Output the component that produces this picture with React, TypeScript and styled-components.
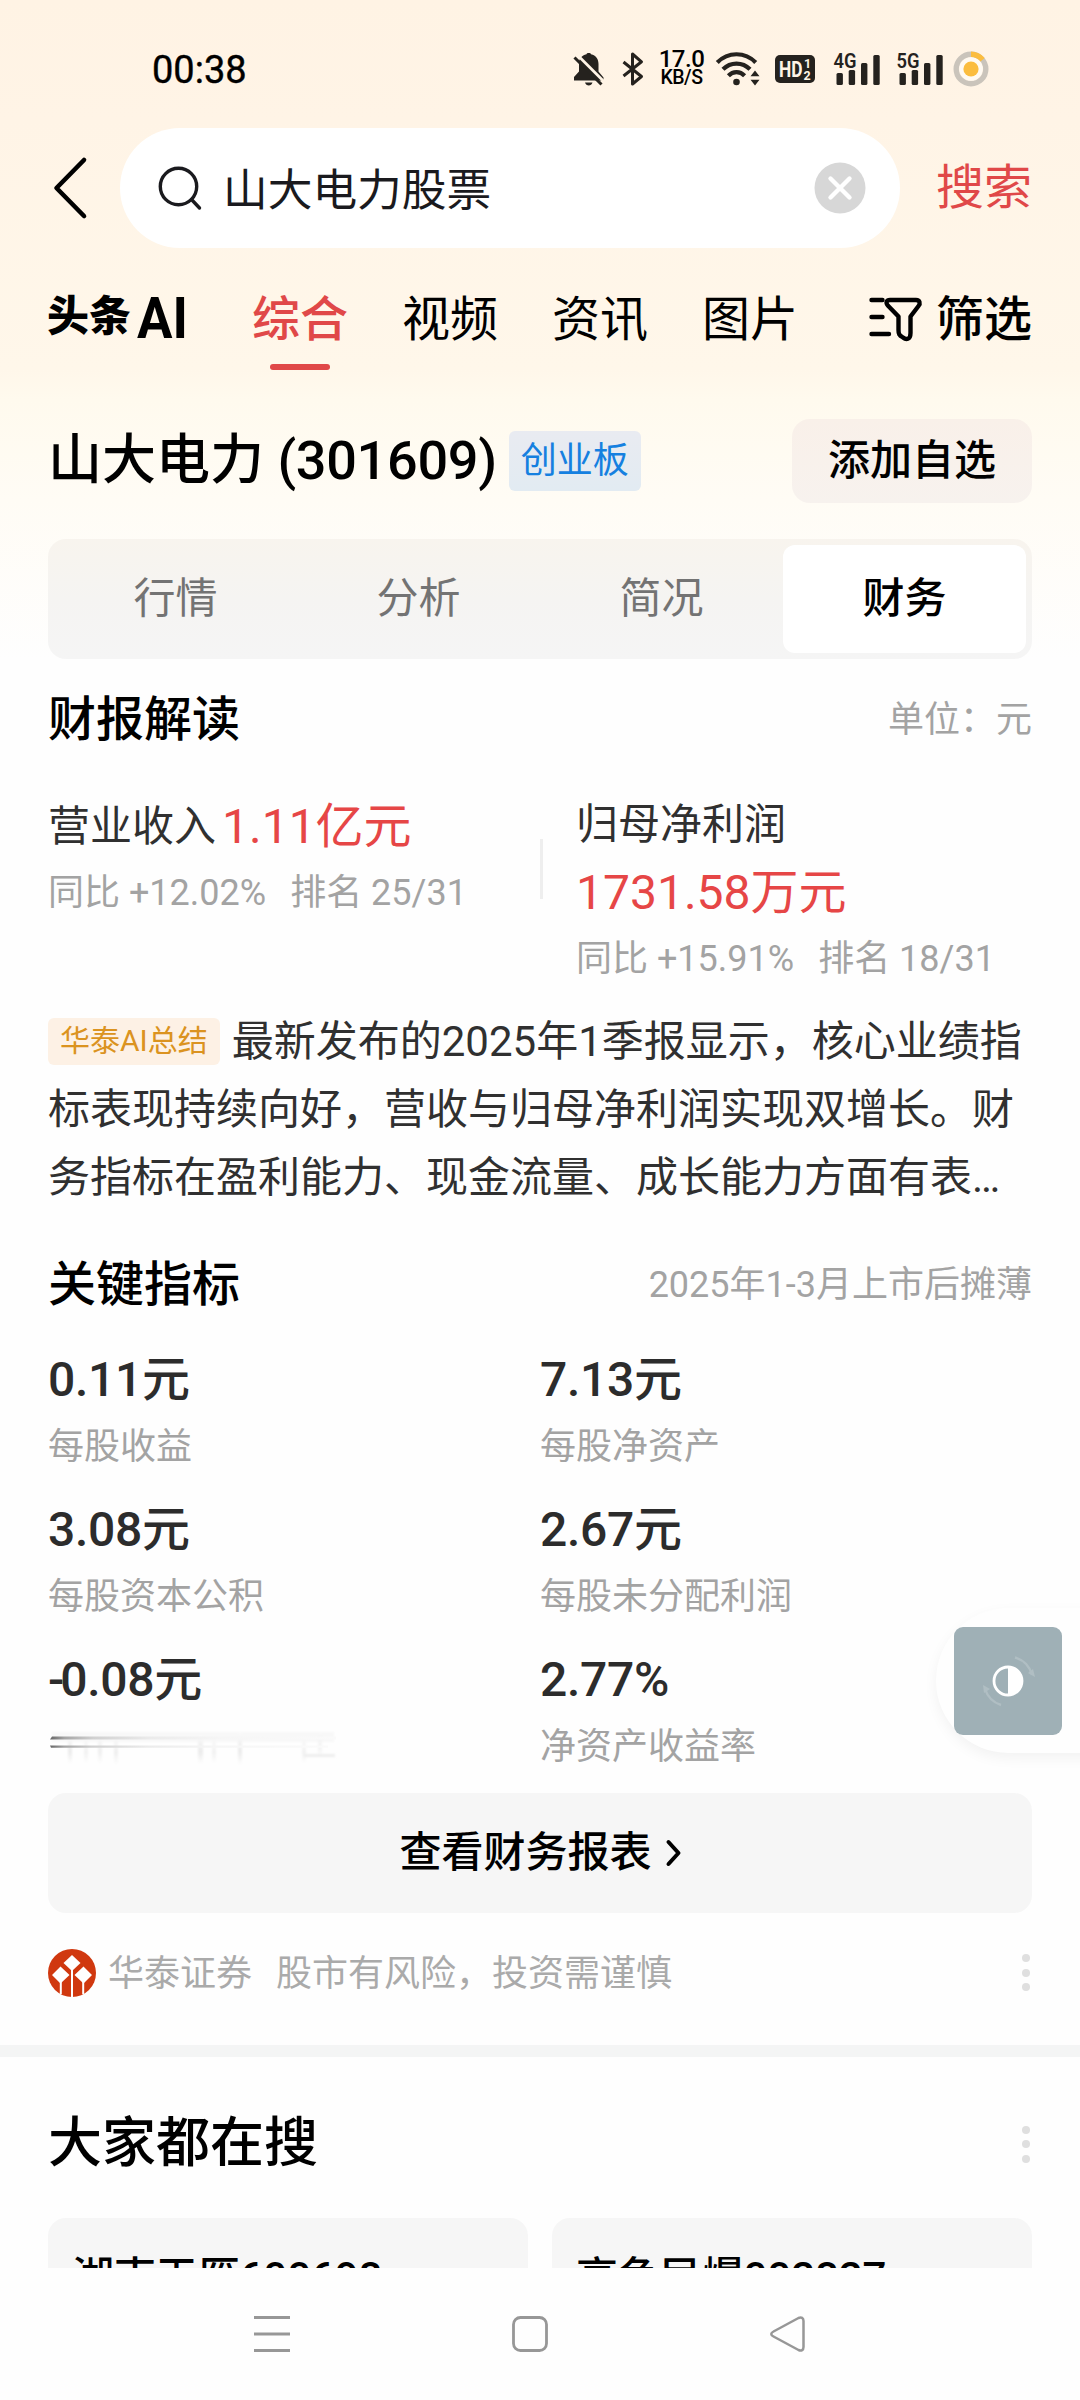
import React from "react";
import styled, { createGlobalStyle } from "styled-components";

const GlobalStyle = createGlobalStyle`
  * { box-sizing: border-box; }
  html, body { margin: 0; padding: 0; background: #fefefe; }
  body { font-family: Roboto, "Noto Sans CJK SC", sans-serif; color: #000; }
  svg { display: block; flex: none; overflow: visible; }
`;

const Phone = styled.div`
  width: 1080px;
  height: 2400px;
  display: flex;
  flex-direction: column;
  background: #fefefe;
  overflow: hidden;
  position: relative;
`;

const Screen = styled.main`
  height: 2268px;
  flex: none;
  overflow: hidden;
  display: flex;
  flex-direction: column;
  background: linear-gradient(
    180deg,
    #fff3e4 0,
    #fff4e6 120px,
    #fff7ea 370px,
    #fffaee 400px,
    #fffcf5 500px,
    #fefefe 660px
  );
`;

const StatusBar = styled.header`
  height: 128px;
  flex: none;
  padding: 46px 91px 0 152px;
  display: flex;
  justify-content: space-between;
`;

const Clock = styled.span`
  height: 46px;
  line-height: 48px;
  font-size: 38px;
  font-weight: 400;
  -webkit-text-stroke: 0.4px #000;
`;

const StatusIcons = styled.div`
  height: 46px;
  display: flex;
  align-items: center;
`;

const Gap = styled.i<{ $w: number }>`
  width: ${(p) => p.$w}px;
  flex: none;
`;

const NetSpeed = styled.div`
  width: 43px;
  display: flex;
  flex-direction: column;
  align-items: center;
  color: #000;
  font-weight: 500;
`;

const SpeedLine = styled.span<{ $size: number; $lh: number }>`
  font-size: ${(p) => p.$size}px;
  line-height: ${(p) => p.$lh}px;
  white-space: nowrap;
  letter-spacing: -0.5px;
`;

const SearchRow = styled.div`
  height: 120px;
  flex: none;
  padding: 0 48px 0 53px;
  display: flex;
  align-items: center;
`;

const SearchBox = styled.div`
  width: 780px;
  height: 120px;
  margin-left: 33px;
  padding: 0 34px 0 38px;
  border-radius: 60px;
  background: #fff;
  display: flex;
  align-items: center;
`;

const Query = styled.span`
  flex: 1;
  padding: 5px 0 0 21px;
  font-size: 44.7px;
  line-height: 60px;
  color: #1a1a1e;
`;

const SearchButton = styled.span`
  margin-left: auto;
  font-size: 48px;
  line-height: 60px;
  color: #e04848;
`;

const TabRow = styled.nav`
  height: 171px;
  flex: none;
  padding: 36px 48px 0;
  display: flex;
`;

const Brand = styled.span`
  width: 204px;
  display: flex;
  white-space: nowrap;
  line-height: 68px;
`;

const BrandHan = styled.span`
  width: 90px;
  margin-left: -1px;
  font-size: 42px;
  line-height: 66px;
  font-weight: 900;
`;

const BrandLatin = styled.span`
  font-size: 58px;
  font-weight: 700;
  transform: scaleX(0.91);
  transform-origin: 0 50%;
`;

const Tab = styled.span<{ $active?: boolean }>`
  width: 96px;
  margin-right: 54px;
  font-size: 48px;
  line-height: 72px;
  font-weight: ${(p) => (p.$active ? 500 : 400)};
  color: ${(p) => (p.$active ? "#e04848" : "#000")};
  white-space: nowrap;
  &::after {
    content: "";
    display: ${(p) => (p.$active ? "block" : "none")};
    width: 60px;
    height: 6px;
    margin: 8px auto 0;
    border-radius: 3px;
    background: #e04848;
  }
`;

const Filter = styled.span`
  margin-left: auto;
  height: 72px;
  display: flex;
  align-items: center;
  gap: 14px;
  font-size: 48px;
  line-height: 72px;
  font-weight: 500;
`;

const StockHeader = styled.div`
  height: 84px;
  flex: none;
  padding: 0 48px;
  display: flex;
  align-items: center;
`;

const StockName = styled.h1`
  margin: 0;
  font-size: 54px;
  font-weight: 500;
  line-height: 84px;
  white-space: nowrap;
`;

const StockCode = styled.span`
  letter-spacing: -0.3px;
`;

const BoardTag = styled.span`
  margin-left: 12px;
  height: 60px;
  padding: 0 12px;
  border-radius: 6px;
  background: linear-gradient(180deg, #e9ebf1, #e2ebf2);
  color: #1580e0;
  font-size: 36px;
  line-height: 61px;
`;

const AddButton = styled.button`
  margin-left: auto;
  width: 240px;
  height: 84px;
  border: 0;
  padding: 0;
  border-radius: 18px;
  background: linear-gradient(180deg, #f9f0e9, #f7f2ee);
  font: 500 42px/84px Roboto, "Noto Sans CJK SC", sans-serif;
  color: #000;
`;

const Segments = styled.div`
  height: 120px;
  flex: none;
  margin: 36px 48px 0;
  padding: 6px;
  border-radius: 18px;
  background: linear-gradient(180deg, #f8f4ee, #f5f4f2 50%, #f5f5f5);
  display: grid;
  grid-template-columns: repeat(4, 1fr);
`;

const Segment = styled.span<{ $active?: boolean }>`
  border-radius: 12px;
  text-align: center;
  font-size: 42px;
  line-height: 108px;
  font-weight: ${(p) => (p.$active ? 500 : 400)};
  color: ${(p) => (p.$active ? "#000" : "#737373")};
  background: ${(p) => (p.$active ? "#fff" : "transparent")};
`;

const SectionHead = styled.div<{ $top: number }>`
  height: 72px;
  flex: none;
  margin-top: ${(p) => p.$top}px;
  padding: 0 48px;
  display: flex;
  justify-content: space-between;
  align-items: center;
`;

const SectionTitle = styled.h2<{ $size?: number }>`
  margin: 0;
  font-size: ${(p) => p.$size ?? 48}px;
  font-weight: 500;
  line-height: 72px;
`;

const Muted = styled.span`
  font-size: 36px;
  line-height: 48px;
  color: #a3a3a3;
  white-space: nowrap;
`;

const Results = styled.div`
  height: 198px;
  flex: none;
  margin-top: 34px;
  padding: 0 48px;
  display: flex;
`;

const ResultLeft = styled.div`
  width: 492px;
  padding-top: 4px;
`;

const ResultRight = styled.div`
  padding-left: 33px;
`;

const Divider = styled.i`
  width: 3px;
  height: 60px;
  margin-top: 49px;
  background: #eeeeee;
`;

const ResultLine = styled.div<{ $h: number }>`
  height: ${(p) => p.$h}px;
  line-height: ${(p) => p.$h}px;
  display: flex;
  white-space: nowrap;
`;

const ResultLabel = styled.span`
  font-size: 42px;
  color: #303030;
`;

const Amount = styled.span<{ $left?: number }>`
  margin-left: ${(p) => p.$left ?? 0}px;
  font-size: 48px;
  color: #e64646;
`;

const Compare = styled.span`
  font-size: 36px;
  margin-right: 24px;
  color: #a3a3a3;
`;

const Summary = styled.p`
  height: 204px;
  flex: none;
  margin: 20px 0 0;
  padding: 0 48px;
  font-size: 42px;
  line-height: 68px;
  color: #303030;
  white-space: nowrap;
`;

const SummaryTag = styled.span`
  display: inline-block;
  height: 47px;
  margin-right: 12px;
  padding: 0 12px;
  border-radius: 6px;
  background: #fdf1e5;
  color: #db9320;
  font-size: 30px;
  line-height: 46px;
  vertical-align: 5px;
`;

const Metrics = styled.div`
  height: 450px;
  flex: none;
  margin-top: 29px;
  padding: 0 48px;
  display: grid;
  grid-template-columns: 492px 1fr;
  grid-auto-rows: 150px;
`;

const Metric = styled.div`
  display: flex;
  flex-direction: column;
  gap: 13px;
`;

const MetricValue = styled.strong`
  font-size: 48px;
  font-weight: 500;
  line-height: 60px;
  letter-spacing: -0.3px;
  color: #2c2c2c;
`;

const Minus = styled.span`
  letter-spacing: -4px;
`;

const ReportButton = styled.div`
  height: 120px;
  flex: none;
  margin: -7px 48px 0;
  border-radius: 18px;
  background: #f6f6f6;
  display: flex;
  align-items: center;
  justify-content: center;
  gap: 14px;
  font-size: 42px;
  line-height: 120px;
  font-weight: 500;
`;

const Source = styled.footer`
  height: 132px;
  flex: none;
  padding: 36px 48px 0;
  display: flex;
  align-items: flex-start;
`;

const SourceText = styled(Muted)<{ $left: number }>`
  margin-left: ${(p) => p.$left}px;
  line-height: 50px;
  color: #aaaaaa;
`;

const DotColumn = styled.div<{ $top: number }>`
  width: 12px;
  margin: ${(p) => p.$top}px 0 0 auto;
  display: flex;
  flex-direction: column;
  align-items: center;
  gap: 6.5px;
  i {
    width: 8px;
    height: 8px;
    border-radius: 50%;
    background: #dfdfdf;
  }
`;

const Band = styled.div`
  height: 12px;
  flex: none;
  background: #f4f5f5;
`;

const Suggestions = styled.div`
  flex: none;
  margin-top: 38px;
  padding: 0 48px;
  display: grid;
  grid-template-columns: 1fr 1fr;
  gap: 24px;
`;

const Suggestion = styled.div`
  height: 120px;
  padding-left: 24px;
  border-radius: 18px;
  background: #f6f6f6;
  font-size: 42px;
  line-height: 120px;
  letter-spacing: -0.1px;
  font-weight: 500;
`;

const SystemNav = styled.div`
  height: 132px;
  flex: none;
  padding: 0 274px 0 253px;
  background: #fefefe;
  display: flex;
  align-items: center;
  justify-content: space-between;
`;

const FloatShell = styled.aside`
  position: absolute;
  left: 936px;
  top: 1608px;
  width: 200px;
  height: 145px;
  border-radius: 73px 0 0 73px;
  background: #fefefe;
  box-shadow: 0 5px 14px rgba(0, 0, 0, 0.05);
`;

const FloatTile = styled.div`
  margin: 19px 0 0 18px;
  width: 108px;
  height: 108px;
  border-radius: 9px;
  background: #9fb0b6;
  display: flex;
`;

const INK = "#25221e";

const BellOff = () => (
  <svg width="32" height="34" viewBox="0 0 32 34">
    <path
      d="M13.5 2.2C13.5 0.6 18 0.6 18 2.2C23 3.4 25.5 7 25.5 12V19.5L30.5 25.5V28.5H1V25L6 19.5V12C6 6.5 8.6 3.4 13.5 2.2Z"
      fill={INK}
    />
    <path d="M12 30.5H19.5C18.5 34.4 13 34.4 12 30.5Z" fill={INK} />
    <path d="M4.4 3.1L31.4 30.1" stroke="#fff4e6" strokeWidth="2.8" />
    <path d="M1.5 5.5L28.5 32.5" stroke={INK} strokeWidth="3" />
  </svg>
);

const Bluetooth = () => (
  <svg width="22" height="34" viewBox="0 0 22 34" fill="none">
    <path
      d="M1.5 10L19.5 24.5L10.5 32V2L19.5 9.8L1.5 24"
      stroke={INK}
      strokeWidth="3"
      strokeLinejoin="round"
    />
  </svg>
);

const Wifi = () => (
  <svg width="44" height="34" viewBox="0 0 44 34" fill="none">
    <g stroke={INK} strokeWidth="4.2">
      <path d="M1.3 10.5C12-0.5 29-0.5 39.7 10.5" />
      <path d="M7 17.3C14.5 9.6 26.5 9.6 34 17.3" />
      <path d="M12.4 23.8C17 19 24 19 28.6 23.8" />
    </g>
    <circle cx="20.5" cy="30" r="3.3" fill={INK} />
    <path d="M34.5 24.3L39 18.5L43.5 24.3Z M34.5 27.7L39 33.5L43.5 27.7Z" fill={INK} />
  </svg>
);

const HdBadge = () => (
  <svg width="40" height="28" viewBox="0 0 40 28">
    <rect width="40" height="28" rx="5" fill={INK} />
    <g fill="#fff4e6" fontFamily="Roboto, sans-serif" fontWeight="700">
      <text x="4" y="22" fontSize="22" textLength="23.5" lengthAdjust="spacingAndGlyphs">HD</text>
      <text x="29" y="13" fontSize="12.5">1</text>
      <text x="28.5" y="25" fontSize="12.5">2</text>
    </g>
  </svg>
);

const Signal = ({ label }: { label: string }) => (
  <svg width="48" height="34" viewBox="0 0 48 34" fill={INK}>
    <text
      x="0.5"
      y="16"
      fontFamily="Roboto, sans-serif"
      fontWeight="600"
      fontSize="21"
      textLength="23"
      lengthAdjust="spacingAndGlyphs"
    >
      {label}
    </text>
    <rect x="3.5" y="21" width="6.4" height="12" rx="1.5" />
    <rect x="15.7" y="18" width="6.4" height="15" rx="1.5" />
    <rect x="28" y="11" width="6.4" height="22" rx="1.5" />
    <rect x="40.3" y="3" width="6.4" height="30" rx="1.5" />
  </svg>
);

const BatteryRing = () => (
  <svg width="36" height="36" viewBox="0 0 36 36" fill="none">
    <circle cx="18" cy="18" r="14.8" stroke="#cac4bb" strokeWidth="5.4" />
    <path d="M18 3.2A14.8 14.8 0 0 1 29.6 8.8" stroke="#fbbd3f" strokeWidth="5.4" />
    <circle cx="18" cy="18" r="11.5" fill="#fffaf2" />
    <circle cx="18" cy="18" r="7.6" fill="#fbbd3f" />
  </svg>
);

const BackArrow = () => (
  <svg width="34" height="62" viewBox="0 0 34 62" fill="none">
    <path
      d="M31 3L3.5 31L31 59"
      stroke="#000"
      strokeWidth="4.6"
      strokeLinecap="round"
      strokeLinejoin="round"
    />
  </svg>
);

const Magnifier = () => (
  <svg width="44" height="44" viewBox="0 0 44 44" fill="none" stroke="#1a1a1e" strokeWidth="3.4">
    <circle cx="20.5" cy="20.5" r="18.2" />
    <path d="M33.5 33.5L41.5 42" strokeLinecap="round" />
  </svg>
);

const ClearIcon = () => (
  <svg width="52" height="52" viewBox="0 0 52 52">
    <circle cx="26" cy="26" r="25.5" fill="#d7d7d7" />
    <path d="M16.5 16.5L35.5 35.5M35.5 16.5L16.5 35.5" stroke="#fff" strokeWidth="4.4" strokeLinecap="round" />
  </svg>
);

const FilterIcon = () => (
  <svg
    width="53"
    height="46"
    viewBox="0 0 53 46"
    fill="none"
    stroke="#000"
    strokeWidth="4.4"
    strokeLinecap="round"
    strokeLinejoin="round"
  >
    <path d="M2.5 3H13.5M2.5 20H13.5M2.5 37H20" />
    <path d="M21 3H47C51 3 51.5 6.5 49.5 9L41.5 19.5V36C41.5 43 37 43 34 40.5C30 38 29.5 37 29.5 33V19.5L18.8 8.5C16.5 5.5 17.5 3 21 3Z" />
  </svg>
);

const Chevron = () => (
  <svg width="15" height="28" viewBox="0 0 15 28" fill="none">
    <path d="M2.5 3L12.5 14L2.5 25" stroke="#000" strokeWidth="4" strokeLinecap="round" strokeLinejoin="round" />
  </svg>
);

const BrokerLogo = () => (
  <svg width="48" height="48" viewBox="0 0 48 48">
    <circle cx="24" cy="24" r="24" fill="#d0380f" />
    <path
      d="M24 6L32.5 14L24 22L15.5 14ZM12.5 17.5L21.5 26L12.5 34.5L4 26ZM35.5 17.5L44 26L35.5 34.5L26.5 26Z"
      fill="#fff"
    />
    <path d="M24 21V48M12.8 33V45M35.2 33V45" stroke="#fff" strokeWidth="2" />
  </svg>
);

const SmearedLabel = () => (
  <svg width="288" height="48" viewBox="0 0 288 48">
    <defs>
      <linearGradient id="fade">
        <stop offset="0" stopColor="#666" />
        <stop offset="0.05" stopColor="#a5a5a5" />
        <stop offset="0.15" stopColor="#d0d0d0" />
        <stop offset="0.35" stopColor="#ebebeb" />
        <stop offset="0.6" stopColor="#f6f6f6" />
        <stop offset="1" stopColor="#fafafa" />
      </linearGradient>
      <linearGradient id="drop" x1="0" y1="0" x2="0" y2="1">
        <stop offset="0" stopColor="#fafafa" />
        <stop offset="0.6" stopColor="#ebebeb" />
        <stop offset="1" stopColor="#fdfdfd" />
      </linearGradient>
      <filter id="soft" x="-10%" y="-20%" width="120%" height="140%">
        <feGaussianBlur stdDeviation="1.3" />
      </filter>
    </defs>
    <g fill="url(#drop)" filter="url(#soft)">
      <rect x="4" y="9" width="282" height="10" fill="#f8f8f8" />
      <rect x="20" y="12" width="4" height="28" />
      <rect x="36" y="14" width="4" height="26" opacity="0.7" />
      <rect x="50" y="12" width="4" height="28" opacity="0.8" />
      <rect x="66" y="13" width="4" height="28" opacity="0.8" />
      <rect x="150" y="12" width="5" height="28" />
      <rect x="164" y="14" width="4" height="26" opacity="0.7" />
      <rect x="190" y="10" width="4" height="31" />
      <rect x="254" y="14" width="4" height="26" opacity="0.7" />
      <rect x="270" y="10" width="4" height="24" opacity="0.6" />
      <rect x="256" y="31" width="31" height="3" fill="#eeeeee" />
    </g>
    <path d="M4 13.5H288V16.5H2Z" fill="url(#fade)" />
    <path d="M2 22.5H280V24.7H3Z" fill="url(#fade)" />
  </svg>
);

const ContrastIcon = () => (
  <svg width="108" height="108" viewBox="0 0 108 108" fill="none">
    <path d="M61 30.5A25 25 0 0 1 78 48" stroke="#b0bec3" strokeWidth="2.4" />
    <path d="M74 46L81 50L79 42Z" fill="#b0bec3" />
    <path d="M47 78A25 25 0 0 1 31 62" stroke="#b0bec3" strokeWidth="2.4" />
    <path d="M29 58L36 62L30 66Z" fill="#b0bec3" />
    <circle cx="54" cy="54" r="14" stroke="#fff" strokeWidth="2.8" />
    <path d="M54 40.5A13.5 13.5 0 0 1 54 67.5Z" fill="#fff" />
  </svg>
);

const MenuIcon = () => (
  <svg width="38" height="38" viewBox="0 0 38 38" stroke="#979797" strokeWidth="2.8">
    <path d="M1 2.5H37M1 19H37M1 35.5H37" />
  </svg>
);

const HomeIcon = () => (
  <svg width="38" height="38" viewBox="0 0 38 38" fill="none">
    <rect x="2.5" y="2.5" width="33" height="33" rx="7" stroke="#979797" strokeWidth="2.8" />
  </svg>
);

const NavBackIcon = () => (
  <svg width="37" height="38" viewBox="0 0 37 38" fill="none">
    <path
      d="M29.5 3C32.5 1.8 34.5 3 34.5 6V32C34.5 35 32.5 36.2 29.5 35L4.5 21.5C1.5 20 1.5 18 4.5 16.5Z"
      stroke="#979797"
      strokeWidth="2.5"
      strokeLinejoin="round"
    />
  </svg>
);

const MoreDots = ({ top }: { top: number }) => (
  <DotColumn $top={top}>
    <i />
    <i />
    <i />
  </DotColumn>
);

const tabs = ["综合", "视频", "资讯", "图片"];
const segments = ["行情", "分析", "简况", "财务"];
const metrics: { value: string; negative?: boolean; label?: string }[] = [
  { value: "0.11元", label: "每股收益" },
  { value: "7.13元", label: "每股净资产" },
  { value: "3.08元", label: "每股资本公积" },
  { value: "2.67元", label: "每股未分配利润" },
  { value: "0.08元", negative: true },
  { value: "2.77%", label: "净资产收益率" },
];
const suggestions = ["湖南天雁600698", "高争民爆002827"];

export default function App() {
  return (
    <>
      <GlobalStyle />
      <Phone>
        <Screen>
          <StatusBar>
            <Clock>00:38</Clock>
            <StatusIcons>
              <BellOff />
              <Gap $w={17} />
              <Bluetooth />
              <Gap $w={16} />
              <NetSpeed>
                <SpeedLine $size={24} $lh={18}>17.0</SpeedLine>
                <SpeedLine $size={19.5} $lh={20}>KB/S</SpeedLine>
              </NetSpeed>
              <Gap $w={13} />
              <Wifi />
              <Gap $w={15} />
              <HdBadge />
              <Gap $w={18} />
              <Signal label="4G" />
              <Gap $w={15} />
              <Signal label="5G" />
              <Gap $w={9} />
              <BatteryRing />
            </StatusIcons>
          </StatusBar>

          <SearchRow>
            <BackArrow />
            <SearchBox>
              <Magnifier />
              <Query>山大电力股票</Query>
              <ClearIcon />
            </SearchBox>
            <SearchButton>搜索</SearchButton>
          </SearchRow>

          <TabRow>
            <Brand>
              <BrandHan>头条</BrandHan>
              <BrandLatin>AI</BrandLatin>
            </Brand>
            {tabs.map((t, i) => (
              <Tab key={t} $active={i === 0}>
                {t}
              </Tab>
            ))}
            <Filter>
              <FilterIcon />
              筛选
            </Filter>
          </TabRow>

          <StockHeader>
            <StockName>
              山大电力 <StockCode>(301609)</StockCode>
            </StockName>
            <BoardTag>创业板</BoardTag>
            <AddButton>添加自选</AddButton>
          </StockHeader>

          <Segments>
            {segments.map((s, i) => (
              <Segment key={s} $active={i === 3}>
                {s}
              </Segment>
            ))}
          </Segments>

          <SectionHead $top={25}>
            <SectionTitle>财报解读</SectionTitle>
            <Muted>单位：元</Muted>
          </SectionHead>

          <Results>
            <ResultLeft>
              <ResultLine $h={66}>
                <ResultLabel>营业收入</ResultLabel>
                <Amount $left={6}>1.11亿元</Amount>
              </ResultLine>
              <ResultLine $h={67}>
                <Compare>同比 +12.02%</Compare>
                <Compare>排名 25/31</Compare>
              </ResultLine>
            </ResultLeft>
            <Divider />
            <ResultRight>
              <ResultLine $h={70}>
                <ResultLabel>归母净利润</ResultLabel>
              </ResultLine>
              <ResultLine $h={66}>
                <Amount>1731.58万元</Amount>
              </ResultLine>
              <ResultLine $h={66}>
                <Compare>同比 +15.91%</Compare>
                <Compare>排名 18/31</Compare>
              </ResultLine>
            </ResultRight>
          </Results>

          <Summary>
            <SummaryTag>华泰AI总结</SummaryTag>
            最新发布的2025年1季报显示，核心业绩指
            <br />
            标表现持续向好，营收与归母净利润实现双增长。财
            <br />
            务指标在盈利能力、现金流量、成长能力方面有表…
          </Summary>

          <SectionHead $top={37}>
            <SectionTitle>关键指标</SectionTitle>
            <Muted>2025年1-3月上市后摊薄</Muted>
          </SectionHead>

          <Metrics>
            {metrics.map((m) => (
              <Metric key={m.value}>
                <MetricValue>
                  {m.negative && <Minus>-</Minus>}
                  {m.value}
                </MetricValue>
                {m.label ? <Muted>{m.label}</Muted> : <SmearedLabel />}
              </Metric>
            ))}
          </Metrics>

          <ReportButton>
            查看财务报表
            <Chevron />
          </ReportButton>

          <Source>
            <BrokerLogo />
            <SourceText $left={12}>华泰证券</SourceText>
            <SourceText $left={24}>股市有风险，投资需谨慎</SourceText>
            <MoreDots top={5} />
          </Source>

          <Band />

          <SectionHead $top={51}>
            <SectionTitle $size={54}>大家都在搜</SectionTitle>
            <MoreDots top={0} />
          </SectionHead>

          <Suggestions>
            {suggestions.map((s) => (
              <Suggestion key={s}>{s}</Suggestion>
            ))}
          </Suggestions>
        </Screen>

        <SystemNav>
          <MenuIcon />
          <HomeIcon />
          <NavBackIcon />
        </SystemNav>

        <FloatShell>
          <FloatTile>
            <ContrastIcon />
          </FloatTile>
        </FloatShell>
      </Phone>
    </>
  );
}
